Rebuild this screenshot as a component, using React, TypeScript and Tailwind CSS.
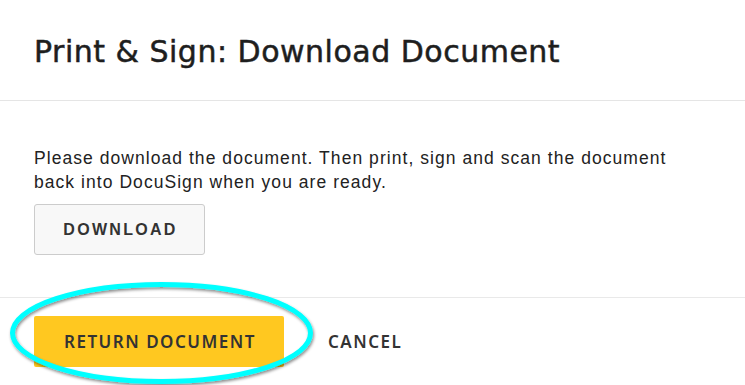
import React from 'react';

const App: React.FC = () => {
  return (
    <div className="relative h-[385px] w-[745px] overflow-hidden bg-white">
      {/* Header */}
      <div className="flex h-[101px] items-center border-b border-[#e5e5e5] px-[34px]">
        <h1 className="pt-[3px] text-[30px] font-normal tracking-[0.5px] text-[#1e1e1e] [-webkit-text-stroke:0.5px_#1e1e1e]" style={{ fontFamily: '"DejaVu Sans", sans-serif' }}>
          Print &amp; Sign: Download Document
        </h1>
      </div>

      {/* Body */}
      <div className="h-[197px] border-b border-[#e9e9e9] px-[34px] pt-[45px]" style={{ fontFamily: '"Liberation Sans", Arial, sans-serif' }}>
        <p className="text-[17.5px] leading-[24px] tracking-[1.05px] text-[#222]">
          Please download the document. Then print, sign and scan the document<br />
          back into DocuSign when you are ready.
        </p>
        <button className="mt-[10px] flex h-[51px] w-[171px] items-center justify-center rounded-[3px] border border-[#cccccc] bg-[#f8f8f8] pl-[2px] text-[16px] font-bold tracking-[2.3px] text-[#333]">
          DOWNLOAD
        </button>
      </div>

      {/* Footer */}
      <div className="flex items-center gap-[44px] px-[34px] pt-[18px]" style={{ fontFamily: '"Noto Sans", sans-serif' }}>
        <button className="flex h-[51px] w-[250px] items-center justify-center rounded-[2px] bg-[#ffc820] pl-[2px] text-[17px] font-semibold tracking-[1.5px] text-[#333]">
          RETURN DOCUMENT
        </button>
        <button className="text-[17px] font-semibold tracking-[1.5px] text-[#333]">CANCEL</button>
      </div>

      {/* Highlight annotation */}
      <svg className="pointer-events-none absolute left-0 top-0" width="745" height="385">
        <defs>
          <filter id="sh" x="-10%" y="-20%" width="120%" height="140%">
            <feDropShadow dx="1" dy="2" stdDeviation="1.5" floodColor="#000" floodOpacity="0.45" />
          </filter>
        </defs>
        <ellipse cx="161.5" cy="333" rx="149" ry="48.5" fill="none" stroke="#00ffff" strokeWidth="5" filter="url(#sh)" />
      </svg>
    </div>
  );
};

export default App;
